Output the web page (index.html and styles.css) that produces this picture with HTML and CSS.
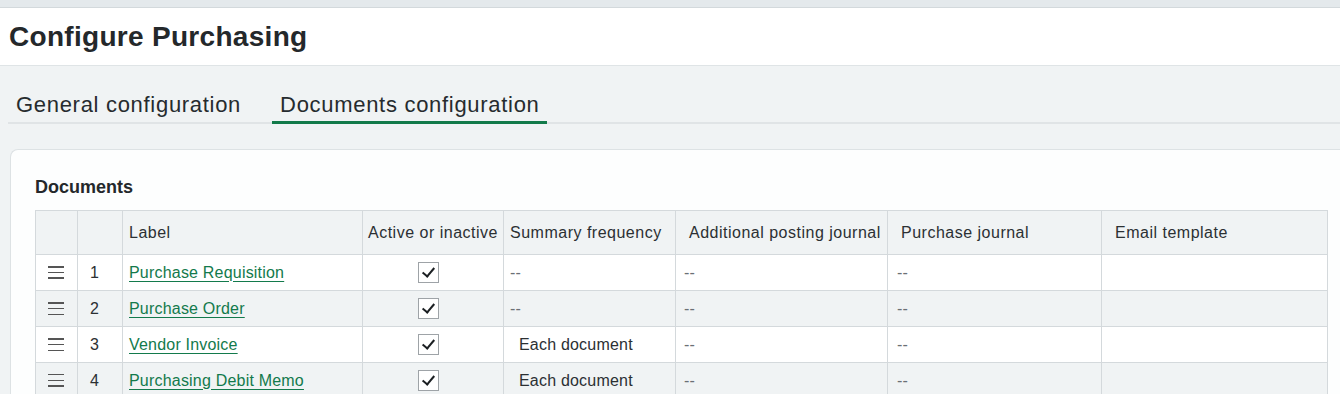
FILE: index.html
```html
<!DOCTYPE html>
<html lang="en">
<head>
    <meta charset="UTF-8">
    <meta name="viewport" content="width=device-width, initial-scale=1.0">
    <title>Configure Purchasing</title>
    <link rel="stylesheet" href="styles.css">
</head>
<body>
    <div class="topbar"></div>
    <header class="page-header">
        <h1>Configure Purchasing</h1>
    </header>

    <!-- Tabs -->
    <nav class="tabs">
        <a class="tab">General configuration</a>
        <a class="tab active">Documents configuration</a>
    </nav>

    <div class="card">
        <h2>Documents</h2>
        <table class="docs">
            <colgroup>
                <col style="width:42px">
                <col style="width:45px">
                <col style="width:240px">
                <col style="width:141px">
                <col style="width:172px">
                <col style="width:212px">
                <col style="width:214px">
                <col>
            </colgroup>
            <thead>
                <tr>
                    <th></th>
                    <th></th>
                    <th class="c-label">Label</th>
                    <th class="c-active">Active or inactive</th>
                    <th class="c-summary">Summary frequency</th>
                    <th class="c-wide">Additional posting journal</th>
                    <th class="c-wide">Purchase journal</th>
                    <th class="c-wide">Email template</th>
                </tr>
            </thead>
            <tbody>
                <tr>
                    <td class="c-drag"><span class="drag"></span></td>
                    <td class="c-num">1</td>
                    <td class="c-label"><a href="#">Purchase Requisition</a></td>
                    <td class="c-check"><span class="checkbox"></span></td>
                    <td class="c-summary empty">--</td>
                    <td class="c-add empty">--</td>
                    <td class="c-pj empty">--</td>
                    <td></td>
                </tr>
                <tr>
                    <td class="c-drag"><span class="drag"></span></td>
                    <td class="c-num">2</td>
                    <td class="c-label"><a href="#">Purchase Order</a></td>
                    <td class="c-check"><span class="checkbox"></span></td>
                    <td class="c-summary empty">--</td>
                    <td class="c-add empty">--</td>
                    <td class="c-pj empty">--</td>
                    <td></td>
                </tr>
                <tr>
                    <td class="c-drag"><span class="drag"></span></td>
                    <td class="c-num">3</td>
                    <td class="c-label"><a href="#">Vendor Invoice</a></td>
                    <td class="c-check"><span class="checkbox"></span></td>
                    <td class="c-each">Each document</td>
                    <td class="c-add empty">--</td>
                    <td class="c-pj empty">--</td>
                    <td></td>
                </tr>
                <tr>
                    <td class="c-drag"><span class="drag"></span></td>
                    <td class="c-num">4</td>
                    <td class="c-label"><a href="#">Purchasing Debit Memo</a></td>
                    <td class="c-check"><span class="checkbox"></span></td>
                    <td class="c-each">Each document</td>
                    <td class="c-add empty">--</td>
                    <td class="c-pj empty">--</td>
                    <td></td>
                </tr>
            </tbody>
        </table>
    </div>
</body>
</html>
```

FILE: styles.css
```css
body {
    font-family: "Liberation Sans", Arial, sans-serif;
    background-color: #f0f3f4; /* grijze achtergrond */
    color: #262b2e;
    margin: 0;
    padding: 0;
    overflow: hidden;
}
.topbar {
    height: 7px;
    background-color: #e4e9ec;
    border-bottom: 1px solid #d3d9dc;
}
.page-header {
    background-color: #ffffff;
    height: 57px;
    border-bottom: 1px solid #dfe4e6;
    display: flex;
    align-items: center;
    padding-left: 9px;
}
.page-header h1 {
    margin: 0;
    font-size: 28px;
    font-weight: bold;
    letter-spacing: 0.3px;
    color: #24282b;
}

/* Tabs */
.tabs {
    display: flex;
    gap: 24px;
    margin-left: 8px;
    padding-top: 25px;
    border-bottom: 2px solid #e0e4e6;
}
.tab {
    font-size: 22px;
    letter-spacing: 0.7px;
    line-height: 28px;
    padding: 0 7px 2px 8px;
    border-bottom: 3px solid transparent;
    margin-bottom: -2px;
    color: #262b2e;
}
.tab.active {
    border-bottom-color: #127a4a; /* groen */
}

/* Card */
.card {
    margin: 25px -12px 0 10px;
    padding: 26px 24px 0 24px;
    background-color: #fdfefe;
    border: 1px solid #dde2e4;
    border-right: none;
    border-radius: 8px 0 0 0;
    min-height: 300px;
}
.card h2 {
    margin: 0 0 12px 0;
    font-size: 18px;
    font-weight: bold;
    line-height: 22px;
    color: #24282b;
}

/* Tabel */
.docs {
    width: 1293px;
    border-collapse: collapse;
    table-layout: fixed;
    font-size: 16px;
    letter-spacing: 0.2px;
    color: #2b3033;
}
.docs th,
.docs td {
    border: 1px solid #d4d9dc;
    padding: 0;
    text-align: left;
    white-space: nowrap;
}
.docs th {
    height: 43px;
    font-weight: normal;
    letter-spacing: 0.5px;
    background-color: #f0f3f4;
}
.docs td {
    height: 35px;
}
.docs tbody tr:nth-child(even) td {
    background-color: #f0f3f4;
}
.docs tbody tr:nth-child(odd) td {
    background-color: #ffffff;
}
.c-label { padding-left: 6px !important; }
.c-active { padding-left: 5px !important; }
.c-summary { padding-left: 6px !important; }
.c-wide { padding-left: 13px !important; }
.c-each { padding-left: 15px !important; }
.c-add { padding-left: 8px !important; }
.c-pj { padding-left: 9px !important; }
.c-num { padding-left: 12px !important; }
.c-drag { padding-left: 12px !important; }
.c-check { text-align: center !important; padding-right: 10px !important; }

.empty {
    color: #6b7075;
}
.docs a {
    color: #137a4c;
    text-decoration: underline;
    text-underline-offset: 3px;
}

/* Sleep-handvat */
.drag {
    display: block;
    width: 16px;
    height: 13px;
    background: linear-gradient(#555 0 1.5px, transparent 1.5px 5.7px, #555 5.7px 7.3px, transparent 7.3px 11.5px, #555 11.5px 13px);
}

/* Vinkje */
.checkbox {
    display: inline-block;
    position: relative;
    width: 19px;
    height: 19px;
    border: 1px solid #9ea3a7;
    background-color: #ffffff;
    vertical-align: middle;
}
.checkbox::after {
    content: "";
    position: absolute;
    left: 6px;
    top: 2px;
    width: 5px;
    height: 10px;
    border-right: 2px solid #1b1f22;
    border-bottom: 2px solid #1b1f22;
    transform: rotate(40deg);
}
```
